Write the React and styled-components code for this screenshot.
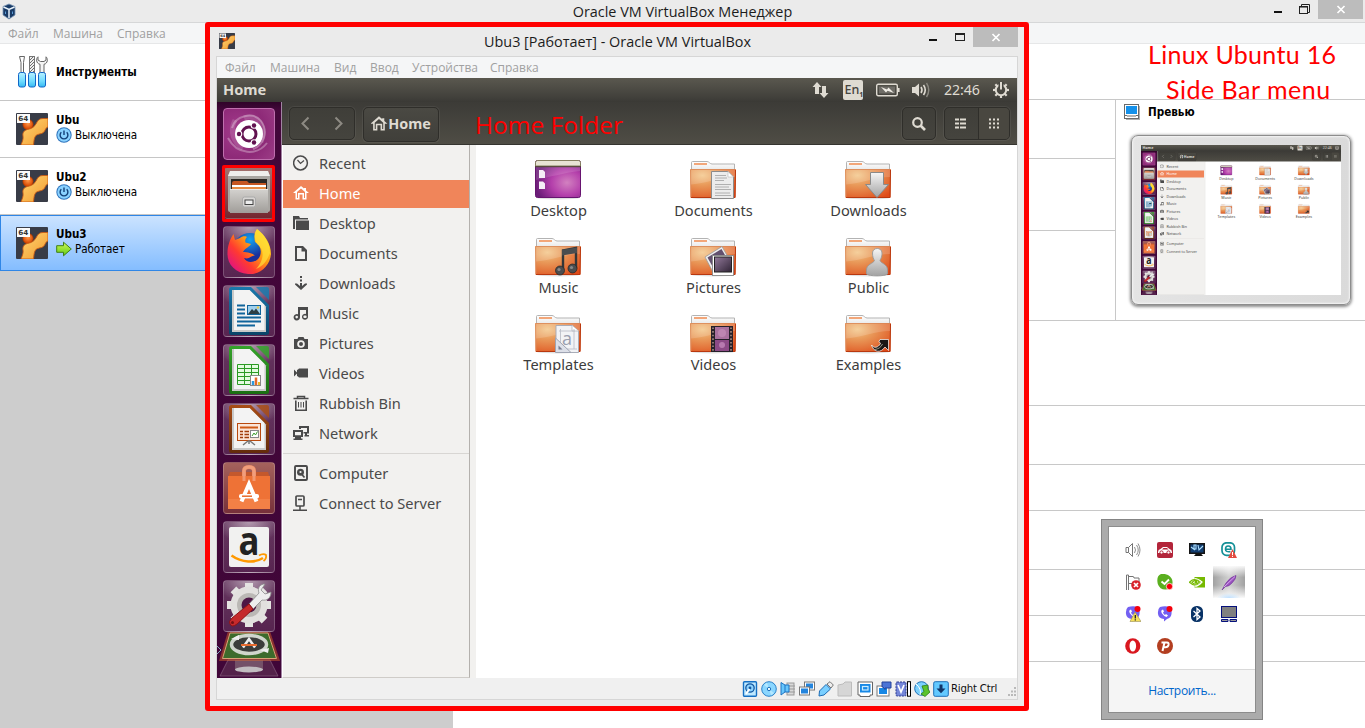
import React from 'react';
import styled, { createGlobalStyle, css } from 'styled-components';

const Global = createGlobalStyle`
  * { box-sizing: border-box; }
  body { margin: 0; background: #fff; overflow: hidden; }
  svg { display: block; flex: none; }
`;

const segoe = `"Open Sans", "Noto Sans", sans-serif`;
const tahoma = `"DejaVu Sans Condensed", "DejaVu Sans", sans-serif`;
const ubuntu = `"Noto Sans", "Open Sans", sans-serif`;

/* ---------- host manager window ---------- */
const Desktop = styled.div`
  position: relative;
  width: 1365px;
  height: 728px;
  overflow: hidden;
  display: flex;
  flex-direction: column;
  background: #fff;
  font-family: ${segoe};
`;
const HostTitle = styled.header`
  height: 23px;
  flex: none;
  display: flex;
  align-items: flex-start;
  background: #ebebeb;
  border-bottom: 1px solid #d6d7d8;
  padding: 0 2px 0 1px;
`;
const HostIcon = styled.div`
  padding-top: 3px;
  width: 17px;
`;
const HostCaption = styled.div`
  flex: 1;
  padding-left: ${p => p.$shift}px;
  text-align: center;
  font-size: 14.4px;
  line-height: ${p => p.$lh}px;
  color: #1c1c1c;
  white-space: nowrap;
`;
const MenuBar = styled.nav`
  height: 21px;
  flex: none;
  display: flex;
  align-items: center;
  gap: ${p => p.$gap}px;
  padding-left: ${p => p.$left}px;
  padding-top: ${p => (p.$line ? 2 : 0)}px;
  background: #f5f6f7;
  border-bottom: ${p => (p.$line ? '1px solid #e6e7e8' : '0')};
`;
const MenuItem = styled.span`
  width: ${p => p.$w}px;
  white-space: nowrap;
  font-size: 12px;
  line-height: 20px;
  color: #a0a0a0;
`;
const HostBody = styled.div`
  flex: 1;
  display: flex;
`;
const MachineList = styled.aside`
  width: 453px;
  background: #cdcdcd;
`;
const Machine = styled.div`
  height: 57px;
  display: flex;
  align-items: center;
  gap: 8px;
  padding: 0 0 1px ${p => (p.$active ? 15 : 16)}px;
  background: #fff;
  border-bottom: 1px solid #c6c6c6;
  ${p =>
    p.$active &&
    css`
      height: 56px;
      padding-bottom: 0;
      background: linear-gradient(#cbe3ff, #84bdff);
      border: 1px solid #2f86e6;
    `}
`;
const MachineText = styled.div`
  display: flex;
  flex-direction: column;
  margin-bottom: ${p => (p.$single ? 0 : 2)}px;
`;
const MachineName = styled.div`
  font: bold 11.6px/14px ${tahoma};
  color: #000;
`;
const MachineState = styled.div`
  display: flex;
  align-items: center;
  gap: 3px;
  height: 16px;
  font: 11.6px/16px ${tahoma};
  letter-spacing: -0.1px;
  color: #000;
`;
const Details = styled.section`
  flex: 1;
  display: flex;
  flex-direction: column;
  padding-top: 55px;
`;
const DetailTop = styled.div`
  display: flex;
  height: 222px;
  border-top: 1px solid #c8c8c8;
  border-bottom: 1px solid #c8c8c8;
`;
const DetailStack = styled.div`
  width: 663px;
  border-right: 1px solid #c8c8c8;
`;
const DetailRow = styled.div`
  height: ${p => p.$h}px;
  border-bottom: 1px solid #c8c8c8;
`;
const PreviewPane = styled.div`
  flex: 1;
  padding: 4px 0 0 8px;
`;
const PreviewHead = styled.div`
  display: flex;
  align-items: center;
  gap: 8px;
  height: 16px;
  font: bold 11.6px/16px ${tahoma};
`;
const Monitor = styled.div`
  width: 220px;
  height: 170px;
  margin: 15px 0 0 7px;
  padding: 9px;
  border: 1px solid #8d8d8d;
  border-radius: 7px;
  background: linear-gradient(90deg, #e4e4e4, #dadada);
  box-shadow: 0 1px 3px 1px rgba(0, 0, 0, 0.45), inset 0 0 2px 1px #f4f4f4;
`;
const Thumb = styled.div`
  width: 200px;
  height: 150px;
  overflow: hidden;
`;
const Shrink = styled.div`
  width: 800px;
  height: 600px;
  transform: scale(0.25);
  transform-origin: 0 0;
`;

/* window buttons */
const Caption = styled.div`
  display: flex;
  height: 20px;
`;
const CaptionBtn = styled.div`
  width: ${p => p.$w || 26}px;
  height: ${p => p.$h || 19}px;
  display: flex;
  justify-content: center;
  background: ${p => (p.$close ? '#bcbcbc' : 'transparent')};
`;

/* ---------- VM window ---------- */
const RedFrame = styled.div`
  position: absolute;
  left: 205px;
  top: 22px;
  width: 824px;
  height: 689px;
  border: 5px solid #f00;
  border-radius: 3px;
  background: #ebebeb;
  padding: 0 6px 6px;
  display: flex;
  flex-direction: column;
`;
const VmTitle = styled.div`
  height: 29px;
  flex: none;
  display: flex;
`;
const VmIcon = styled.div`
  padding: 6px 0 0 3px;
  width: 19px;
`;
const VmInner = styled.div`
  width: 802px;
  border: 1px solid #d6d6d6;
  display: flex;
  flex-direction: column;
`;
const StatusBar = styled.div`
  height: 21px;
  display: flex;
  align-items: center;
  background: #f0f0f0;
  padding-left: 525px;
`;
const StatusIcons = styled.div`
  display: flex;
  gap: 3.1px;
`;
const HostKey = styled.div`
  font: 11.3px/20px ${tahoma};
  color: #111;
  letter-spacing: -0.2px;
  padding: 1px 0 0 2px;
  width: 60px;
  white-space: nowrap;
`;

/* ---------- Ubuntu guest ---------- */
const Guest = styled.div`
  width: 800px;
  height: 600px;
  display: flex;
  flex-direction: column;
  font-family: ${ubuntu};
  background: #fff;
  overflow: hidden;
`;
const Panel = styled.div`
  height: 24px;
  flex: none;
  display: flex;
  align-items: center;
  justify-content: space-between;
  padding: 0 7px 0 6px;
  background: linear-gradient(#5a584f, #403f3a 85%, #3a3935);
  color: #dfdbd2;
`;
const PanelTitle = styled.div`
  font-size: 14.6px;
  font-weight: 700;
  line-height: 22px;
  padding-bottom: 2px;
`;
const Indicators = styled.div`
  display: flex;
  align-items: center;
`;
const Slot = styled.div`
  width: ${p => p.$w}px;
  display: flex;
`;
const Clock = styled.div`
  width: 48px;
  font-size: 14.2px;
  line-height: 24px;
  letter-spacing: -0.1px;
`;
const EnBadge = styled.div`
  width: 20px;
  height: 20px;
  border-radius: 2px;
  background: #dfdbd2;
  color: #45443f;
  font-size: 12.5px;
  font-weight: 500;
  line-height: 20px;
  padding-left: 1.5px;
  sub { font-size: 7px; line-height: 0; vertical-align: -3px; font-weight: 700; }
`;
const GuestBody = styled.div`
  flex: 1;
  display: flex;
  min-height: 0;
`;
const Launcher = styled.div`
  width: 65px;
  flex: none;
  display: flex;
  flex-direction: column;
  align-items: flex-start;
  gap: 7px;
  padding: 6px 0 0 6px;
  background: linear-gradient(#2f0429, #43073a 8px, #400638);
  border-right: 1px solid #a184a2;
`;
const Tile = styled.div`
  width: 52px;
  height: 52px;
  flex: none;
  border-radius: 4px;
  border: 1px solid ${p => p.$edge || 'rgba(255,255,255,.2)'};
  background: ${p =>
    p.$bg ||
    'radial-gradient(ellipse 32px 22px at 50% 0, rgba(255,255,255,.5), rgba(255,255,255,0)), linear-gradient(rgba(255,255,255,.2), rgba(255,255,255,.12))'};
  svg { margin: -1px 0 0 -1px; overflow: visible; }
`;
const TileStack = styled.div`
  margin: -7px 0 0 -6px;
  height: 46px;
`;
const Files = styled.div`
  flex: 1;
  display: flex;
  flex-direction: column;
  min-width: 0;
`;
const HeaderBar = styled.div`
  height: 43px;
  flex: none;
  display: flex;
  align-items: flex-start;
  padding: 4px 6px 0 7px;
  background: linear-gradient(#3c3b37, #4f4d45);
  border-bottom: 1px solid #35342f;
`;
const DarkButton = styled.div`
  height: ${p => p.$h || 33}px;
  width: ${p => p.$w}px;
  margin: 1px 0 0 ${p => p.$ml || 0}px;
  display: flex;
  align-items: center;
  justify-content: center;
  border: 1px solid #2f2e2a;
  border-radius: 5px;
  box-shadow: 0 0 0 1px rgba(255, 255, 255, 0.06);
  background: ${p => (p.$lit ? 'linear-gradient(#4a4943,#403f3a)' : 'linear-gradient(#3f3e39,#45443e)')};
  color: #dfdbd2;
`;
const CrumbLabel = styled.span`
  font-size: 14.4px;
  font-weight: 700;
  line-height: 20px;
  padding-bottom: 2px;
`;
const Half = styled.div`
  flex: 1;
  height: 100%;
  display: flex;
  align-items: center;
  justify-content: center;
  padding-right: ${p => (p.$on ? 0 : 3)}px;
  background: ${p => (p.$on ? '#494740' : 'transparent')};
  border-left: ${p => (p.$on ? '1px solid #2f2e2a' : '0')};
  border-radius: 0 4px 4px 0;
`;
const FilesBody = styled.div`
  flex: 1;
  display: flex;
`;
const Sidebar = styled.div`
  width: 188px;
  background: #f2f1ef;
  border-right: 1px solid #b4b1ad;
  border-left: 1px solid #fff;
  border-bottom: 1px solid #cfccc8;
  padding-top: 4px;
`;
const Place = styled.div`
  height: 28px;
  margin: 1px 0 2px;
  display: flex;
  align-items: center;
  gap: 10px;
  padding: 0 0 2px 10px;
  font-size: 14.6px;
  line-height: 26px;
  white-space: nowrap;
  color: ${p => (p.$on ? '#fff' : '#4a4a4a')};
  background: ${p => (p.$on ? '#f0855a' : 'transparent')};
`;
const Divider = styled.div`
  height: 1px;
  background: #d8d6d3;
  margin: 5px 0 6px;
`;
const Gutter = styled.div`
  width: 6px;
  background: #f2f1ef;
`;
const IconGrid = styled.div`
  flex: 1;
  background: #fff;
  display: grid;
  grid-template-columns: repeat(3, 155px);
  grid-auto-rows: 77px;
  padding: 15px 0 0 5px;
  align-content: start;
`;
const FolderCell = styled.div`
  display: flex;
  flex-direction: column;
  align-items: center;
  svg { overflow: visible; margin-right: 1px; }
`;
const FolderName = styled.div`
  font-size: 14.6px;
  line-height: 20px;
  color: #3c3c3c;
`;

/* ---------- notes over the screens ---------- */
const Note = styled.div`
  position: absolute;
  left: ${p => p.$x}px;
  top: ${p => p.$y}px;
  font: ${p => p.$s}px/34px ${p => p.$f || '"Open Sans"'}, sans-serif;
  letter-spacing: ${p => p.$ls || 0}px;
  white-space: nowrap;
  color: #f00;
`;
const TileMark = styled.div`
  position: absolute;
  left: 222px;
  top: 165px;
  width: 53px;
  height: 57px;
  border: 3px solid #f00;
  border-radius: 2px;
`;

/* ---------- tray popup ---------- */
const Tray = styled.div`
  position: absolute;
  left: 1101px;
  top: 519px;
  width: 162px;
  height: 201px;
  padding: 6px;
  border: 1px solid #848484;
  background: #ababab;
`;
const TrayBox = styled.div`
  height: 187px;
  border: 1px solid #8c8c8c;
  background: #fff;
  display: flex;
  flex-direction: column;
`;
const TrayGrid = styled.div`
  height: 142px;
  padding: 7px 0 0 8px;
  display: grid;
  grid-template-columns: repeat(4, 32px);
  grid-auto-rows: 32px;
`;
const TrayCell = styled.div`
  display: flex;
  align-items: center;
  justify-content: center;
  background: ${p =>
    p.$hot
      ? 'radial-gradient(ellipse 12px 5px at 50% 100%, #bfe0ff, transparent), linear-gradient(90deg, rgba(255,255,255,0), rgba(255,255,255,.5) 50%, rgba(255,255,255,0)), linear-gradient(#f6f6f6, #a2a2a2 35%, #a2a2a2 60%, #fafafa)'
      : 'none'};
`;
const TrayFooter = styled.div`
  flex: 1;
  border-top: 1px solid #d9d9d9;
  background: #f5f5f5;
  color: #0066cc;
  text-align: center;
  font-size: 12px;
  letter-spacing: -0.3px;
  line-height: 42px;
`;

/* ---------- drawings ---------- */
const OsLogo = ({ s = 32 }) => (
  <svg width={s} height={s} viewBox="0 0 32 32">
    <defs>
      <linearGradient id="osg" x1="0" y1="0" x2="1" y2="1"><stop offset="0" stopColor="#ffd673" /><stop offset="1" stopColor="#f29a2e" /></linearGradient>
      <radialGradient id="osr" cx=".5" cy=".4"><stop offset="0" stopColor="#ff9a4a" /><stop offset="1" stopColor="#d84b05" /></radialGradient>
    </defs>
    <rect width="32" height="32" rx="1" fill="#383c47" />
    <circle cx="12" cy="11.5" r="5.2" fill="url(#osr)" stroke="#9c3200" strokeWidth=".6" />
    <path d="M32 5.500H27C23.500 5.500 22 7 20.500 10C18.500 14 16 15.500 11.500 16.500C7.500 17.500 6.500 20 7 23C7.500 26 6.500 28 5 32H17.500C18 28 18 26 19 24C20 21.500 22 21.500 25.500 20.500C30 19 28.500 15 32 14Z" fill="url(#osg)" stroke="#c85a14" strokeWidth=".9" />
    <rect x="1" y="1" width="13" height="9" fill="#fafafa" />
    <text x="2.300" y="8.200" fontFamily="DejaVu Sans" fontWeight="bold" fontSize="7" textLength="10" lengthAdjust="spacingAndGlyphs" fill="#333">64</text>
  </svg>
);
const Tools = () => (
  <svg width="32" height="32" viewBox="0 0 32 32">
    <defs><linearGradient id="hnd" x1="0" x2="0" y1="0" y2="1"><stop offset="0" stopColor="#b8f0ff" /><stop offset=".6" stopColor="#6fdcff" /><stop offset="1" stopColor="#36b8f0" /></linearGradient>
      <pattern id="drl" width="3" height="3" patternUnits="userSpaceOnUse"><path d="M0 3L3 0" stroke="#6d6d6d" /></pattern></defs>
    <path d="M3.500.500H8.500L7.500 6.500V17H5V6.500Z" fill="#fff" stroke="#666" />
    <rect x="13.500" y=".5" width="5" height="16" fill="#eee" stroke="#777" />
    <rect x="13.500" y=".5" width="5" height="16" fill="url(#drl)" />
    <path d="M22 .8C19.800 2.500 20 7.500 24 8.300V17H28V8.300C32 7.500 32 2.500 30 .8V4L28 5.500H24.500L22 4Z" fill="#f4f4f4" stroke="#666" />
    {[2.5, 12.5, 22.5].map(x => <rect key={x} x={x} y="16.500" width="7" height="14.500" rx="2" fill="url(#hnd)" stroke="#1266c8" />)}
  </svg>
);
const Power = () => (
  <svg width="16" height="16" viewBox="0 0 16 16">
    <circle cx="8" cy="8" r="7.700" fill="#2e74bd" /><circle cx="8" cy="8" r="6.700" fill="#8ad2ff" />
    <path d="M5.300 5.200A3.900 3.900 0 1 0 10.700 5.200M8 3.500V8" fill="none" stroke="#123f78" strokeWidth="1.400" />
  </svg>
);
const RunArrow = () => (
  <svg width="16" height="16" viewBox="0 0 16 16">
    <defs><linearGradient id="grn" x1="0" x2="0" y1="0" y2="1"><stop offset="0" stopColor="#d2f95c" /><stop offset="1" stopColor="#5fcb10" /></linearGradient></defs>
    <path d="M.7 4.700H7.500V1.200L15.300 8L7.500 14.800V11.300H.7Z" fill="url(#grn)" stroke="#3f7f17" />
  </svg>
);
const VBoxLogo = () => (
  <svg width="16" height="17" viewBox="0 0 16 17">
    <path d="M8 1L14 3.500V12L8 16L2 12V3.500Z" fill="#183a66" stroke="#7996b5" strokeWidth=".8" />
    <path d="M2.500 4L8 6.500L13.500 4M8 6.500V15" stroke="#e8f2fb" strokeWidth="1.500" fill="none" />
    <path d="M4.500 8.500V11M11.500 8.500V11" stroke="#5b9bd5" />
  </svg>
);
const MonIcon = () => (
  <svg width="16" height="16" viewBox="0 0 16 16">
    <rect x="2" y="2" width="14" height="14" fill="#b0b0b0" />
    <rect x=".5" y=".5" width="14" height="14" fill="#fff" stroke="#6a6a6a" />
    <rect x="2" y="2" width="11" height="8" fill="#1591ea" /><path d="M0 11.500H3M12 11.500H15M3 12H12" stroke="#6a6a6a" />
  </svg>
);
const MinIcon = ({ y }) => <svg width="26" height="20"><rect x="8" y={y} width="8" height="2" fill="#111" /></svg>;
const CloseX = ({ y = 6 }) => (
  <svg width="45" height="19"><path d={`M19.500 ${y}L26.500 ${y + 7}M26.500 ${y}L19.500 ${y + 7}`} stroke="#fff" strokeWidth="1.700" /></svg>
);

const paths = {
  Recent: <g fill="none" stroke="currentColor" strokeWidth="1.500"><circle cx="7.500" cy="8" r="6.900" /><path d="M4.500 5L7.500 8.500L11 5.500" strokeWidth="1.200" /></g>,
  Home: <path d="M8 1L0 8H2.500V14.500H6.500V9.500H9.500V14.500H13.500V8H16L13 5.400V3H11V3.600ZM8 3.600L12 7.100V13H11V8H5V13H4V7.100Z" fill="currentColor" fillRule="evenodd" />,
  Desktop: <path d="M0 1H6L7 3H15V4.500H2V14H0ZM3 5.500H16V15H3Z" fill="currentColor" />,
  Documents: <path d="M2 1H10L14 5V16H2ZM4 3V14H12V6.500H8.500V3Z" fill="currentColor" fillRule="evenodd" />,
  Downloads: <path d="M7 1H9V3H7ZM7 4.500H9V6.500H7ZM7 8H9V11L12 8.500H14V9.500L8 15L2 9.500V8.500H4L7 11Z" fill="currentColor" />,
  Music: <path d="M5 2H15V11.500A3 3 0 1 1 13 9V5H7V12A3.200 3.200 0 1 1 5 9.300ZM3.700 10.800A1.300 1.300 0 1 0 3.700 13.400A1.300 1.300 0 1 0 3.700 10.800ZM12 10.500A1.300 1.300 0 1 0 12 13A1.300 1.300 0 1 0 12 10.500Z" fill="currentColor" fillRule="evenodd" />,
  Pictures: <path d="M1 4H4.500L5.500 2H10.500L11.500 4H15V14H1ZM8 5.200A3.800 3.800 0 1 0 8 12.800A3.800 3.800 0 1 0 8 5.200ZM8 7A2 2 0 1 1 8 11A2 2 0 1 1 8 7Z" fill="currentColor" fillRule="evenodd" />,
  Videos: <path d="M1 4.500L4 7.500V5L5 4.500L6 3.500H15V12.500H6L5 11.500L4 11V8.500L1 11.500Z" fill="currentColor" />,
  Bin: <g fill="none" stroke="currentColor"><path d="M.5 3.500H15.500M4.500 3V1.500H11.500V3" strokeWidth="1.500" /><path d="M2.800 5.500V15.200H13.200V5.500" strokeWidth="1.600" /><path d="M5.500 7V12.500M8 7V12.500M10.500 7V12.500" /></g>,
  Network: <path d="M6 1H16V8.500H14V10H16V11.500H11.500V10H12V8.500H10.500V7H14V3H8V4H6ZM0 5H10V12H8V13.500H9.500V15H.500V13.500H2V12H0ZM2 7V10.200H8V7Z" fill="currentColor" fillRule="evenodd" />,
  Computer: <g><rect x="2" y="1" width="12" height="14" rx="1" fill="none" stroke="currentColor" strokeWidth="1.900" /><circle cx="7.500" cy="7.200" r="3.500" fill="currentColor" /><circle cx="7.500" cy="7" r="1.100" fill="#f2f1ef" /><path d="M8.500 9L11.500 12.500" stroke="currentColor" strokeWidth="1.800" /></g>,
  Server: <g fill="none" stroke="currentColor" strokeWidth="1.700"><rect x="3" y="1" width="8" height="10" rx="1" /><path d="M5 4.500H9M7 11V15M0 15.200H14" strokeWidth="1.500" /></g>,
};
const PlaceIcon = ({ k }) => <svg width="16" height="16" viewBox="0 0 16 16">{paths[k]}</svg>;

/* folder emblems, drawn in the folder's own 46 x 40 coordinates */
const emblems = {
  Documents: <g><path d="M21.500 11.500H38L43.500 17V38.500H21.500Z" fill="#ececec" stroke="#8b8b8b" /><path d="M38 11.500V17H43.500Z" fill="#fff" stroke="#bbb" strokeWidth=".6" /><path d="M25 15.500H36M25 18H37M25 20.500H34M25 24.500H41M25 27H39M25 29.500H41M25 33H40M25 35.500H41" stroke="#a9a9a9" strokeWidth=".9" /></g>,
  Downloads: <path d="M25.500 12.500H38.500V24.500H43.500L32 37.500L20.500 24.500H25.500Z" fill="url(#gry)" stroke="#8a8a8a" />,
  Music: <g><path d="M28 33V13.500L41 11V31.500" fill="none" stroke="#333638" strokeWidth="2.400" /><path d="M27 12.800L42 10.500V16L27 18.500Z" fill="#4a4d4f" /><circle cx="25" cy="33.500" r="4.500" fill="#4b4d4f" stroke="#222" strokeWidth=".7" /><circle cx="37.500" cy="31.500" r="4.500" fill="#4b4d4f" stroke="#222" strokeWidth=".7" /><circle cx="24" cy="32.500" r="1.600" fill="#888" /><circle cx="36.500" cy="30.500" r="1.600" fill="#888" /></g>,
  Pictures: <g><path d="M15 20L32 9.500L42 27L24 37Z" fill="#eee" stroke="#999" strokeWidth=".8" /><path d="M17.500 20.500L31.500 12L39 25L24.500 33Z" fill="#62506e" /><rect x="22.500" y="18.500" width="21" height="20" fill="#fff" stroke="#888" strokeWidth=".9" /><rect x="24.500" y="20" width="17" height="15" fill="url(#pho)" stroke="#222" /></g>,
  Public: <path d="M27.500 16C27.500 10 37 10 37 16C37 20.500 35.500 22 35 23.500C36 26.500 42.500 27 42.500 33V37C40 39.500 24.500 39.500 21.500 37V33C21.500 27 28.500 26.500 29.500 23.500C28.500 22 27.500 20 27.500 16Z" fill="url(#gry)" stroke="#999" strokeWidth=".9" />,
  Templates: <g><path d="M21 11.500H37.500L43.500 17V38.500H21Z" fill="#f2f3f6" stroke="#a9adb8" /><path d="M37 11.500V17H43.500" fill="#fff" stroke="#b5b8c0" strokeWidth=".8" /><path d="M24 17H40M39 15V35M25.500 15V32M31 35H42" stroke="#bcc0ca" strokeWidth=".9" /><text x="27" y="31" fontFamily="Open Sans" fontSize="18" fill="#9a9fb0">a</text><path d="M20.500 24L36 38.500H20.500Z" fill="#dcdfe8" stroke="#9fa4b3" /><path d="M23.500 31.500L27.500 35.500H23.500Z" fill="#777d90" /></g>,
  Videos: <g><rect x="21" y="12" width="22" height="26" fill="#25202a" /><rect x="25" y="13" width="14" height="12" fill="#a9719f" /><rect x="25" y="26" width="14" height="11" fill="#8c4a86" /><circle cx="32" cy="19" r="4" fill="#c690bb" opacity=".7" /><circle cx="32" cy="31" r="3" fill="#c98fc0" opacity=".7" /><path d="M23 13.500V38M41 13.500V38" stroke="#a58a80" strokeWidth="1.600" strokeDasharray="1.600 2" /></g>,
  Examples: <g><path d="M35 25.500H43.500V36.500L40 33C36 39 29 39 26.500 31C29 34.500 33 34 35.500 29.500L34 27.500Z" fill="#1b1715" stroke="#fff" strokeWidth=".7" /><path d="M30 35.500C33 35 36 33.500 37.500 30" stroke="#998" strokeWidth="1" fill="none" /></g>,
};
const Folder = ({ name }) => (
  <svg width="46" height="40" viewBox="0 0 46 40">
    <defs>
      <radialGradient id="fld" cx=".27" cy=".22" r=".95"><stop offset="0" stopColor="#f3c78a" /><stop offset=".35" stopColor="#e99a5a" /><stop offset=".7" stopColor="#e37239" /><stop offset="1" stopColor="#df4a18" /></radialGradient>
      <linearGradient id="bck" x1="0" x2="0" y1="0" y2="1"><stop offset="0" stopColor="#fff" /><stop offset="1" stopColor="#e4e4e4" /></linearGradient>
      <linearGradient id="gry" x1="0" x2="0" y1="0" y2="1"><stop offset="0" stopColor="#f6f6f6" /><stop offset="1" stopColor="#a2a2a2" /></linearGradient>
      <linearGradient id="pho" x1="0" x2="1" y1="0" y2="1"><stop offset="0" stopColor="#937a9b" /><stop offset="1" stopColor="#302436" /></linearGradient>
      <radialGradient id="dsk" cx=".7" cy=".6" r=".7"><stop offset="0" stopColor="#d281c0" /><stop offset=".5" stopColor="#b43fab" /><stop offset="1" stopColor="#6b1d78" /></radialGradient>
    </defs>
    {name === 'Desktop' ? (
      <g>
        <ellipse cx="23" cy="38" rx="21" ry="1.500" fill="#000" opacity=".12" />
        <rect x=".5" y=".5" width="45" height="37" rx="2" fill="url(#dsk)" stroke="#671470" />
        <path d="M1 7H45V11C28 13 15 17 1 20Z" fill="#fff" opacity=".13" />
        <path d="M.5 6V2.500Q.5.500 2.500.500H43.500Q45.500.500 45.500 2.500V6Z" fill="#e8e4d4" stroke="#85805f" />
        <path d="M0 6.700H46" stroke="#4f4a33" />
        <path d="M4 10H8L10 12V18H4ZM4 21.500H8L10 23.500V29H4Z" fill="#f5eef6" />
      </g>
    ) : (
      <g>
        <ellipse cx="23" cy="38" rx="21" ry="1.500" fill="#000" opacity=".12" />
        <path d="M1.500 12V2.500Q1.500 1.500 2.500 1.500H17C19 1.500 20 4 22 4H44.500V12Z" fill="url(#bck)" stroke="#b3b3b3" />
        <path d="M4 3H17V5H4Z" fill="#f2a679" />
        <path d="M0 10Q0 9 1 9H45Q46 9 46 10L45.500 37Q45.500 38 44.500 38H1.500Q.500 38 .500 37Z" fill="url(#fld)" />
        <path d="M.700 9.500H45.500M.700 9.500L1 37.500" stroke="#d98a5c" strokeWidth=".8" fill="none" />
        <path d="M1 37.500H45L45.500 10" stroke="#b9380f" strokeWidth="1" fill="none" />
        <path d="M1 10H45V17C30 17 18 23 1 24.500Z" fill="#fff" opacity=".16" />
        {emblems[name]}
      </g>
    )}
  </svg>
);

const Office = ({ c, d, children }) => (
  <svg width="52" height="52" viewBox="0 0 52 52">
    <defs><linearGradient id={`of${c.slice(1)}`} x1="0" x2="0" y1="0" y2="1"><stop offset="0" stopColor={c} /><stop offset="1" stopColor={d} /></linearGradient></defs>
    <path d="M6 4.500Q6 2 8.500 2H28L46 20V47.500Q46 50 43.500 50H8.500Q6 50 6 47.500Z" fill={`url(#of${c.slice(1)})`} />
    <path d="M33 2H44Q46 2 46 4V15Z" fill={c} opacity=".85" />
    <path d="M9 5H26.500L43 21.500V47H9Z" fill="#c9c9c9" /><path d="M11 5H26.500L41.500 20V45H11Z" fill="#f3f3f3" />
    {children}
  </svg>
);
const Dash = () => (
  <svg width="52" height="52" viewBox="0 0 52 52">
    <g fill="none" stroke="#fff" strokeOpacity=".3" strokeWidth="2"><path d="M9 20C12 8 30 3 38 13C46 24 40 38 30 41" /><path d="M5 30C14 47 34 48 44 35" /><path d="M12 12C6 24 11 35 20 40" strokeWidth="5" strokeOpacity=".14" /><path d="M21 10C34 5 45 20 38 34" strokeWidth="5" strokeOpacity=".14" /></g>
    <circle cx="26" cy="26" r="14" fill="#fff" /><circle cx="26" cy="26" r="7" fill="none" stroke="#621250" strokeWidth="3" />
    {[[16, 26], [31, 17.5], [31, 34.5]].map(([x, y]) => <g key={y}><circle cx={x} cy={y} r="3.300" fill="#fff" /><circle cx={x} cy={y} r="2.200" fill="#621250" /></g>)}
  </svg>
);
const Cabinet = () => (
  <svg width="52" height="52" viewBox="0 0 52 52">
    <defs><linearGradient id="cab" x1="0" x2="0" y1="0" y2="1"><stop offset="0" stopColor="#d4d2cf" /><stop offset="1" stopColor="#a09d99" /></linearGradient></defs>
    <path d="M7 4H45L47 9V43Q47 45 45 45H7Q5 45 5 43V9Z" fill="#a9a6a2" /><path d="M7 4H45L47 9H5Z" fill="#efeeec" />
    <rect x="8" y="12" width="36" height="13" fill="#2b2724" /><path d="M9 16Q9 14 11 14H24L26 16H43V24H9Z" fill="#c65722" /><path d="M9 18H43V20H9Z" fill="#fff" /><path d="M9 20H43V24H9Z" fill="#e58b44" />
    <path d="M7 22H45V46H7Z" fill="url(#cab)" /><path d="M7 22.500H45" stroke="#ecebea" />
    <rect x="19.500" y="30" width="13" height="10" rx="2" fill="#d8d6d4" stroke="#aaa" /><rect x="22" y="33" width="8" height="4.500" fill="#eee" stroke="#444" />
  </svg>
);
const Firefox = () => (
  <svg width="52" height="52" viewBox="0 0 52 52">
    <defs><linearGradient id="ffx" x1=".9" y1=".1" x2=".1" y2=".85"><stop offset="0" stopColor="#ffe226" /><stop offset=".4" stopColor="#ff9a14" /><stop offset=".7" stopColor="#ff3b30" /><stop offset="1" stopColor="#e3157b" /></linearGradient>
      <radialGradient id="ffb" cx=".5" cy=".2"><stop offset="0" stopColor="#12a4f0" /><stop offset="1" stopColor="#1a2f9a" /></radialGradient></defs>
    <circle cx="27" cy="24" r="17" fill="url(#ffb)" />
    <path d="M34 3C42 9 48 18 48 28C47 40 37 49 25 48C12 47 4 38 4.500 27C4.500 20 7 13 10.500 8L12 14L17 12C19 10 23 10 24 11C22 13 22 15 22.500 16.500L28 18C26.500 21 22 22 20 26C24 26 30 27 32 30C28 29 27 34 21 32C24 38 34 37 37 30C39 24 37 19 32 16C31 11 31 7 34 3Z" fill="url(#ffx)" />
    <path d="M34 3C42 9 47 18 47 27C44 34 41 40 33 43C40 36 43 24 34 18C31 12 31 8 34 3Z" fill="#ffe23b" opacity=".7" />
  </svg>
);
const Bag = () => (
  <svg width="52" height="52" viewBox="0 0 52 52">
    <path d="M7 10H45L47 16H5Z" fill="#c4582c" /><path d="M21 17V9Q21 5 26 5Q31 5 31 9V17" fill="none" stroke="#ec8b65" strokeWidth="4" />
    <rect x="5" y="14" width="42" height="33" fill="#ee7236" /><path d="M5 37H47V47H5Z" fill="#f68a52" opacity=".6" />
    <path d="M18.500 39.500L26 22L33.500 39.500" fill="none" stroke="#fff" strokeWidth="4" /><rect x="16" y="32" width="20" height="4.500" rx="2" fill="#fff" /><path d="M19 34.200H29" stroke="#e76a2c" strokeWidth="1.500" />
    <path d="M21 19V9Q21 5 26 5Q31 5 31 9V19" fill="none" stroke="#f2a282" strokeWidth="3" opacity=".8" />
  </svg>
);
const Amazon = () => (
  <svg width="52" height="52" viewBox="0 0 52 52">
    <rect x="6" y="6" width="40" height="40" rx="2" fill="#f1f1f0" />
    <text x="15.500" y="34" fontFamily="Open Sans" fontWeight="bold" fontSize="39" textLength="21" lengthAdjust="spacingAndGlyphs" fill="#222">a</text>
    <path d="M8.500 34.500C19 42 32 42 40 37" fill="none" stroke="#f90" strokeWidth="2.500" /><path d="M36 34.500C39 32.500 42 33 43 34C43.500 36 42.500 38.500 40.500 40" fill="none" stroke="#f90" strokeWidth="1.800" />
  </svg>
);
const Gear = () => (
  <svg width="52" height="52" viewBox="0 0 52 52">
    <g stroke="#e5e4e2" strokeWidth="8">{[0, 45, 90, 135].map(a => <path key={a} d="M26 3V47" transform={`rotate(${a} 26 25)`} />)}</g>
    <circle cx="26" cy="25" r="14" fill="none" stroke="#e2e0de" strokeWidth="9" /><circle cx="26" cy="25" r="12" fill="#bbb8b5" /><circle cx="26" cy="25" r="7.500" fill="#4e1545" />
    <path d="M26 24L36 13C34 8 37 4 42 4L38 10L42 14L48 12C48 18 44 21 39 20L30 29Z" fill="#ededed" stroke="#8d8d8d" strokeWidth=".8" />
    <path d="M26 24L30 29L14 44Q9 48 7 44Q5 42 9 38Z" fill="#c52a2c" stroke="#8e1216" /><circle cx="9.500" cy="42.500" r="1.500" fill="#751015" />
  </svg>
);
const Stack = () => (
  <svg width="65" height="46" viewBox="0 0 65 46">
    <path d="M11 28L3 44H61L53 28Z" fill="#54224a" stroke="#87607f" strokeWidth=".7" /><path d="M18 28H46V38H18Z" fill="#745068" /><ellipse cx="32" cy="37.500" rx="14" ry="3" fill="#c2bcc0" />
    <path d="M12 1L4 27.500H61L52 1Z" fill="none" stroke="#e56626" strokeWidth="3" opacity=".45" />
    <path d="M13 1L5.500 26.500H59.500L51 1Z" fill="#3d6b2c" stroke="#d8a276" strokeWidth="1" />
    <ellipse cx="32" cy="12.500" rx="17.500" ry="9" fill="#3c3d3b" stroke="#d0d5cc" strokeWidth="3.500" />
    <path d="M14 7L22 3V8ZM43 18L52 16L51 21Z" fill="#eee" />
    <path d="M26 15.500L32 7L38 15.500" fill="none" stroke="#eee" strokeWidth="2.500" /><path d="M24 13H40" stroke="#e66a2e" strokeWidth="2" />
    <path d="M0 14L4 18L0 22" fill="none" stroke="#87a9c5" />
  </svg>
);

const tileBgDash = 'radial-gradient(circle at 30% 45%, #a53c8d, #8e2a78 60%, #9c3d86)';
const LauncherBar = () => (
  <Launcher>
    <Tile $bg={tileBgDash} $edge="#bf6fae"><Dash /></Tile>
    <Tile $bg="linear-gradient(#a3726f,#74262f)" $edge="#8f5a60"><Cabinet /></Tile>
    <Tile><Firefox /></Tile>
    <Tile>
      <Office c="#1a79ad" d="#0a4468">
        <path d="M14 20.500H22M14 24.500H22M14 28.500H22M14 32.500H38M14 36.500H38M14 40.500H32" stroke="#10649b" strokeWidth="2" />
        <rect x="24.500" y="20.500" width="13" height="9" fill="#9fd0ee" stroke="#10649b" /><path d="M25 29L29 24L31 26L33 23.500L37 29Z" fill="#2d3e44" /><circle cx="35" cy="22.500" r="1.200" fill="#e8c84e" />
      </Office>
    </Tile>
    <Tile>
      <Office c="#35a32b" d="#1a6e12">
        <rect x="14" y="20" width="22" height="20" fill="#e4fbe0" /><path d="M14.500 20.500H35.500V40.500H14.500ZM14 24.500H36M14 28.500H36M14 32.500H36M14 36.500H36M21.500 20V40M28.500 20V40" stroke="#2b9a24" fill="none" />
        <rect x="27.500" y="31.500" width="10" height="10" fill="#fff" stroke="#888" /><path d="M30 41V37" stroke="#2a9be0" strokeWidth="2.500" /><path d="M33 41V33.500" stroke="#e46a28" strokeWidth="2.500" /><path d="M36 41V38" stroke="#e8b82c" strokeWidth="2" />
      </Office>
    </Tile>
    <Tile>
      <Office c="#a84d16" d="#632b0b">
        <rect x="14.500" y="20.500" width="23" height="17" fill="#fbe5d8" stroke="#b8490e" /><path d="M17 24.500H35" stroke="#cf5a17" strokeWidth="2" /><path d="M17 28.500H20M17 31.500H20M17 34.500H20M21.500 28.500H26M21.500 31.500H26M21.500 34.500H26" stroke="#a03c0b" strokeWidth="1.600" /><rect x="27.500" y="27.500" width="8" height="7" fill="#fff" stroke="#888" /><path d="M29 33L31 30L32.500 32L34.500 28.500" stroke="#3a9b28" fill="none" /><path d="M20 42L25 38M32 42L27 38M26 37V41" stroke="#777" strokeWidth="1.500" />
      </Office>
    </Tile>
    <Tile $bg="linear-gradient(#a4625c,#77303a)"><Bag /></Tile>
    <Tile><Amazon /></Tile>
    <Tile><Gear /></Tile>
    <TileStack><Stack /></TileStack>
  </Launcher>
);

const places = [
  ['Recent', 'Recent'], ['Home', 'Home'], ['Desktop', 'Desktop'], ['Documents', 'Documents'], ['Downloads', 'Downloads'],
  ['Music', 'Music'], ['Pictures', 'Pictures'], ['Videos', 'Videos'], ['Rubbish Bin', 'Bin'], ['Network', 'Network'],
];
const folders = ['Desktop', 'Documents', 'Downloads', 'Music', 'Pictures', 'Public', 'Templates', 'Videos', 'Examples'];

const UbuntuScreen = () => (
  <Guest>
    <Panel>
      <PanelTitle>Home</PanelTitle>
      <Indicators>
        <Slot $w={31}><svg width="18" height="18" viewBox="0 0 18 18"><path d="M5.500 1L10 6H7.500V13H3.500V6H1ZM12.500 17L8 12H10.500V5H14.500V12H17Z" fill="#dfdbd2" transform="translate(-.5 0)" /></svg></Slot>
        <Slot $w={33}><EnBadge>En<sub>1</sub></EnBadge></Slot>
        <Slot $w={35}><svg width="24" height="14" viewBox="0 0 24 14"><rect x=".7" y="1.200" width="20.600" height="11.600" rx="1.500" fill="none" stroke="#dfdbd2" strokeWidth="1.400" /><rect x="3" y="3.500" width="16" height="7" fill="#6f6d67" /><path d="M5 4L11 6.500L12.500 4.500L18 10L11.500 7.800L10 9.500Z" fill="#f0ede6" /><path d="M22.700 5V9" stroke="#dfdbd2" strokeWidth="1.800" /></svg></Slot>
        <Slot $w={33}><svg width="20" height="16" viewBox="0 0 20 16"><path d="M1 5H4L8 1.500V14.500L4 11H1Z" fill="#dfdbd2" /><path d="M10 5Q12 8 10 11M12.500 3Q16 8 12.500 13" fill="none" stroke="#dfdbd2" strokeWidth="1.600" /><path d="M15.500 1Q20 8 15.500 15" fill="none" stroke="#89877f" strokeWidth="1.400" /></svg></Slot>
        <Clock>22:46</Clock>
        <svg width="18" height="18" viewBox="0 0 18 18"><circle cx="9" cy="9" r="5.200" fill="none" stroke="#dfdbd2" strokeWidth="2" /><g stroke="#dfdbd2" strokeWidth="2.200">{[45, 90, 135, 180, 225, 270, 315].map(a => <path key={a} d="M9 4V1" transform={`rotate(${a} 9 9)`} />)}</g><path d="M9 1V9" stroke="#474640" strokeWidth="5" /><path d="M9 1V8.500" stroke="#dfdbd2" strokeWidth="2" /></svg>
      </Indicators>
    </Panel>
    <GuestBody>
      <LauncherBar />
      <Files>
        <HeaderBar>
          <DarkButton $w={66}>
            <svg width="64" height="31" viewBox="0 0 64 31"><path d="M18.500 9.500L12.500 15.500L18.500 21.500M45.500 9.500L51.500 15.500L45.500 21.500" fill="none" stroke="#8d8a83" strokeWidth="2" /></svg>
          </DarkButton>
          <DarkButton $w={76} $h={35} $ml={8} $lit><svg width="17" height="17" viewBox="0 0 16 16"><g transform="translate(-.5 -.8)">{paths.Home}</g></svg><CrumbLabel>Home</CrumbLabel></DarkButton>
          <DarkButton $w={34} $ml={463}><svg width="16" height="16" viewBox="0 0 16 16"><circle cx="6.500" cy="6.500" r="4.300" fill="none" stroke="#dfdbd2" strokeWidth="2.200" /><path d="M9.500 9.500L14 14" stroke="#dfdbd2" strokeWidth="2.600" /></svg></DarkButton>
          <DarkButton $w={66} $ml={8}>
            <Half><svg width="11" height="11" viewBox="0 0 11 11"><path d="M0 1.500H4M0 5.500H4M0 9.500H4M5 1.500H11M5 5.500H11M5 9.500H11" stroke="#dfdbd2" strokeWidth="2" /></svg></Half>
            <Half $on><svg width="11" height="11" viewBox="0 0 11 11"><path d="M0 1.500H11M0 5.500H11M0 9.500H11" stroke="#dfdbd2" strokeWidth="2" strokeDasharray="2 2" /></svg></Half>
          </DarkButton>
        </HeaderBar>
        <FilesBody>
          <Sidebar>
            {places.map(([n, k]) => <Place key={n} $on={n === 'Home'}><PlaceIcon k={k} />{n}</Place>)}
            <Divider />
            <Place><PlaceIcon k="Computer" />Computer</Place>
            <Place><PlaceIcon k="Server" />Connect to Server</Place>
          </Sidebar>
          <Gutter />
          <IconGrid>
            {folders.map(f => <FolderCell key={f}><Folder name={f} /><FolderName>{f}</FolderName></FolderCell>)}
          </IconGrid>
        </FilesBody>
      </Files>
    </GuestBody>
  </Guest>
);

const blue = '#2384dd';
const S = ({ children }) => <svg width="16" height="16" viewBox="0 0 16 16">{children}</svg>;
const StatusSet = () => (
  <StatusIcons>
    <S><rect x="1.500" y=".7" width="13" height="14.500" rx="1" fill="#bfe9ff" stroke="#1670c4" strokeWidth="1.400" /><circle cx="8" cy="7" r="4.200" fill="#8fd4ff" stroke="#1357a0" strokeWidth="1.300" /><circle cx="8" cy="7" r="1.400" fill="#1357a0" /><path d="M7.500 8L4 13" stroke="#fff" strokeWidth="1.800" /></S>
    <S><circle cx="8" cy="8" r="7.300" fill="#8ad6ff" stroke="#2b81c9" /><path d="M8 8L3 4A7 7 0 0 1 6 1.800ZM8 8L13 12A7 7 0 0 1 10 14.200Z" fill="#b4e8ff" /><circle cx="8" cy="8" r="1.700" fill="#e6f8ff" stroke="#2271bd" /></S>
    <S><rect x="7" y="2" width="7" height="12" fill="#d9d9d9" stroke="#999" /><path d="M8 5H15M8 8H15M8 11H15" stroke="#999" /><path d="M1 1.500L5 4H9V11H5L1 14Z" fill="#67c6fc" stroke="#1d73c2" /><path d="M5 4V11" stroke="#1d73c2" /></S>
    <S><rect x="5.500" y="1" width="10" height="8" fill="#fff" stroke="#777" /><rect x="7" y="2.500" width="7" height="5" fill={blue} /><rect x=".5" y="6" width="10" height="8" fill="#fff" stroke="#777" /><rect x="2" y="7.500" width="7" height="5" fill={blue} /></S>
    <S><path d="M1 15L1.500 10L8 3.500L12.500 8L6 14Z" fill="#7acfff" stroke="#1c6cb5" /><path d="M9 3L12 .7L15.300 4L13 7Z" fill="#eee" stroke="#777" /></S>
    <S><path d="M1 4L6 3L8 1H14.500V15H1Z" fill="#d6d6d6" stroke="#bcbcbc" /></S>
    <S><path d="M1 1H15.500V14H13V15.500H3V14H1Z" fill="#fff" stroke="#666" /><rect x="3" y="3" width="10.500" height="8.500" fill="#1788e6" /><rect x="5.500" y="5.500" width="5.500" height="3.500" fill="#1788e6" stroke="#c9ecff" strokeWidth="1.200" /></S>
    <S><rect x="1" y="5" width="12" height="10" fill="#fff" stroke="#777" /><rect x="3" y="7" width="8" height="6" fill="#1687e5" /><path d="M6 1H15V7H9V8.500L7 6H6Z" fill="#4b73d5" stroke="#24439b" /></S>
    <S><rect x="1" y="1" width="10" height="14" rx="1" fill="#7486d8" stroke="#2c3a8e" strokeDasharray="2 1" /><path d="M3 4L6 11L9 4" fill="none" stroke="#fff" strokeWidth="1.700" /><rect x="12.500" y=".7" width="3" height="14.500" fill="#fff" stroke="#000" /></S>
    <S><circle cx="7.500" cy="7.500" r="6.800" fill="#7bd0fc" stroke="#1c6fb8" /><path d="M2 3Q8 8 6 14" stroke="#fff" fill="none" /><path d="M8 5L14 4V8L16 11L11 15.500L7 13L10 10.500Z" fill="#5bc32c" stroke="#2d7a16" strokeWidth=".8" /></S>
    <S><rect x=".7" y=".7" width="14.600" height="14.600" rx="1.500" fill="#63c9ff" stroke="#1e6fb7" /><path d="M6.500 3.500H9.500V7.500H12.500L8 12.300L3.500 7.500H6.500Z" fill="#123668" /></S>
  </StatusIcons>
);

const Viber = ({ warn }) => (
  <S><path d="M3 1Q8-.500 13 1Q15 3 14.500 8Q14 12 10 13L7 15.500V13Q1.500 12.500 1 8Q.500 3 3 1Z" fill="#7360f2" /><path d="M5 4Q3.500 5 5 7.500Q7 10.500 9.500 11L11 9.500L9 8L8 9Q6.500 8 6 6.500L7 5.500L6 3.500Z" fill="#fff" /><circle cx="12.500" cy="3" r="3" fill="#f5000c" />
    {warn && <g><path d="M10 6L16 15.500H5Z" fill="#f6e05a" stroke="#9a8e55" strokeWidth=".6" /><path d="M10.300 9V12.500M10.300 13.300V14.500" stroke="#222" strokeWidth="1.300" /></g>}</S>
);
const trayIcons = [
  <S><path d="M1 5.500H3.500L7.500 1.500V14.500L3.500 10.500H1ZM3.500 5.500V10.500" fill="none" stroke="#747474" /><path d="M9.500 5Q11.500 8 9.500 11M11.500 3Q15 8 11.500 13M13 1.500Q17 8 13 14.500" fill="none" stroke="#8e8e8e" /></S>,
  <S><rect width="16" height="16" rx="2" fill="#b3253a" /><path d="M1 10Q1 7.500 3.500 7L6 5H10L12.500 7Q15 7.500 15 10V11H1Z" fill="#fff" /><path d="M5 7.500L6.500 6H10L11.500 7.500Z" fill="#b3253a" /><circle cx="4.500" cy="10.500" r="1.600" fill="#fff" stroke="#b3253a" /><circle cx="11.500" cy="10.500" r="1.600" fill="#fff" stroke="#b3253a" /></S>,
  <S><rect y="1" width="16" height="11" fill="#151515" /><path d="M1.500 2.500H14.500V10.500H1.500Z" fill="#123d70" /><path d="M2 5L6 8M5 3H7V7H5ZM9 3L10 8L14 4" stroke="#aee0ff" fill="none" strokeWidth="1.100" /><path d="M5 14H14L12 11.500H7Z" fill="#111" /></S>,
  <S><rect x="1" y=".8" width="12.500" height="12.500" rx="4.500" fill="#fff" stroke="#159097" strokeWidth="1.700" /><path d="M4.500 7.200H10Q10 4 7.200 4Q4.500 4 4.500 7.200Q4.500 10.300 9.500 9.600" fill="none" stroke="#159097" strokeWidth="1.600" /><path d="M11.500 7L16 16H7Z" fill="#e34b3f" /><path d="M11.500 10V13M11.500 13.800V15" stroke="#fff" /></S>,
  <S><path d="M1.500 1V16M3.500 1V16M1.500 1H3.500M3.500 2.500H8Q9 2.500 9 4H14V9.500H3.500" fill="none" stroke="#747474" /><circle cx="11" cy="11" r="4.800" fill="#d9232b" /><path d="M9 9L13 13M13 9L9 13" stroke="#fff" strokeWidth="1.700" /></S>,
  <S><path d="M4 0Q8-.500 11 1Q16 4 15.500 9Q15 15 9 15.500Q3 16 .800 10Q-1 2 4 0Z" fill="#5aaf1f" /><path d="M4.500 7.500L7.500 10L12 5.500" fill="none" stroke="#fff" strokeWidth="1.900" /><circle cx="12.500" cy="12.500" r="3.200" fill="#f5000c" stroke="#fff" strokeWidth=".7" /></S>,
  <S><rect x="5.500" y="3" width="10.500" height="10.500" fill="#76b900" /><path d="M.300 8.300Q5.500 2.500 13 8Q7 14.500 .300 8.300Z" fill="#fff" stroke="#76b900" strokeWidth="1.200" /><path d="M5.500 4.500Q9 4.500 13 8Q9 12.500 5.500 12.200" fill="none" stroke="#fff" strokeWidth="1.200" /><path d="M3 8.300Q6.500 4.800 10.500 8Q6.500 12 3 8.300Z" fill="none" stroke="#76b900" strokeWidth="1.200" /><circle cx="7" cy="8.200" r="1.400" fill="#76b900" /></S>,
  <S><path d="M1 16L5 9Q9 3 15 1.500Q15 5 11 9Q8 12.500 4.500 12.500Z" fill="#9953bf" stroke="#6c2c93" strokeWidth=".6" /><path d="M3 13L14 2.500" stroke="#d8a6ec" /></S>,
  <Viber warn />,
  <Viber />,
  <S><rect x="2" width="12" height="16" rx="5.500" fill="#083266" /><path d="M4.500 5L11 11L8 13.500V2.500L11 5L4.500 11" fill="none" stroke="#fff" strokeWidth="1.300" /></S>,
  <S><rect x=".5" y=".5" width="15" height="11" fill="#808080" stroke="#05107c" /><path d="M.5 13.500H7V15.500H.5ZM9 13.500H15.500V15.500H9Z" fill="#999" stroke="#05107c" /></S>,
  <S><ellipse cx="7.800" cy="8" rx="7.600" ry="7.800" fill="#d9171f" /><ellipse cx="7.800" cy="8" rx="3.300" ry="5.600" fill="#fff" /></S>,
  <S><circle cx="8" cy="8" r="8" fill="#b33e20" /><path d="M4.500 4.500H10Q12 4.500 11.500 7Q11 9.200 8.500 9.200H5.500M7.500 4.500L5.500 13" fill="none" stroke="#fff" strokeWidth="2" /></S>,
];

export default function App() {
  return (
    <Desktop>
      <Global />
      <HostTitle>
        <HostIcon><VBoxLogo /></HostIcon>
        <HostCaption $lh={23} $shift={81}>Oracle VM VirtualBox Менеджер</HostCaption>
        <Caption>
          <CaptionBtn><MinIcon y={11} /></CaptionBtn>
          <CaptionBtn><svg width="26" height="20"><path d="M9.500 6V4.500H17.500V12.500H16" stroke="#222" fill="none" /><rect x="7.500" y="6.500" width="8" height="7" fill="none" stroke="#222" /><path d="M7 6.800H16" stroke="#222" strokeWidth="1.500" /></svg></CaptionBtn>
          <CaptionBtn $w={45} $close><CloseX /></CaptionBtn>
        </Caption>
      </HostTitle>
      <MenuBar $line $gap={17} $left={8}>
        <MenuItem $w={28}>Файл</MenuItem><MenuItem $w={47}>Машина</MenuItem><MenuItem $w={50}>Справка</MenuItem>
      </MenuBar>
      <HostBody>
        <MachineList>
          <Machine><Tools /><MachineText $single><MachineName>Инструменты</MachineName></MachineText></Machine>
          {['Ubu', 'Ubu2'].map(n => (
            <Machine key={n}><OsLogo /><MachineText><MachineName>{n}</MachineName><MachineState><Power />Выключена</MachineState></MachineText></Machine>
          ))}
          <Machine $active><OsLogo /><MachineText><MachineName>Ubu3</MachineName><MachineState><RunArrow />Работает</MachineState></MachineText></Machine>
        </MachineList>
        <Details>
          <DetailTop>
            <DetailStack><DetailRow $h={59} /><DetailRow $h={72} /></DetailStack>
            <PreviewPane>
              <PreviewHead><MonIcon />Превью</PreviewHead>
              <Monitor><Thumb><Shrink><UbuntuScreen /></Shrink></Thumb></Monitor>
            </PreviewPane>
          </DetailTop>
          {[85, 59, 46, 59, 46, 46].map((h, i) => <DetailRow key={i} $h={h} />)}
        </Details>
      </HostBody>

      <RedFrame>
        <VmTitle>
          <VmIcon><OsLogo s={16} /></VmIcon>
          <HostCaption $lh={29} $shift={79}>Ubu3 [Работает] - Oracle VM VirtualBox</HostCaption>
          <Caption>
            <CaptionBtn><MinIcon y={12} /></CaptionBtn>
            <CaptionBtn><svg width="26" height="20"><rect x="8.500" y="6.500" width="9" height="7" fill="none" stroke="#222" /><path d="M8 7H18" stroke="#222" strokeWidth="2" /></svg></CaptionBtn>
            <CaptionBtn $w={45} $h={20} $close><CloseX y={7} /></CaptionBtn>
          </Caption>
        </VmTitle>
        <VmInner>
          <MenuBar $gap={16} $left={8}>
            <MenuItem $w={29}>Файл</MenuItem><MenuItem $w={48}>Машина</MenuItem><MenuItem $w={20}>Вид</MenuItem><MenuItem $w={26}>Ввод</MenuItem><MenuItem $w={62}>Устройства</MenuItem><MenuItem $w={50}>Справка</MenuItem>
          </MenuBar>
          <UbuntuScreen />
          <StatusBar>
            <StatusSet />
            <HostKey>Right Ctrl</HostKey>
            <svg width="10" height="14" viewBox="0 0 10 14"><path d="M7 6H9M4 9.500H6M7 9.500H9M1 13H3M4 13H6M7 13H9" stroke="#b9b9b9" strokeWidth="2" /></svg>
          </StatusBar>
        </VmInner>
      </RedFrame>

      <TileMark />
      <Note $x={475} $y={108} $s={24.5}>Home Folder</Note>
      <Note $x={1148} $y={37} $s={25} $ls={0.3} $f="Lato">Linux Ubuntu 16</Note>
      <Note $x={1166} $y={72} $s={25} $ls={0.5} $f="Lato">Side Bar menu</Note>

      <Tray>
        <TrayBox>
          <TrayGrid>{trayIcons.map((ic, i) => <TrayCell key={i} $hot={i === 7}>{ic}</TrayCell>)}</TrayGrid>
          <TrayFooter>Настроить...</TrayFooter>
        </TrayBox>
      </Tray>
    </Desktop>
  );
}
